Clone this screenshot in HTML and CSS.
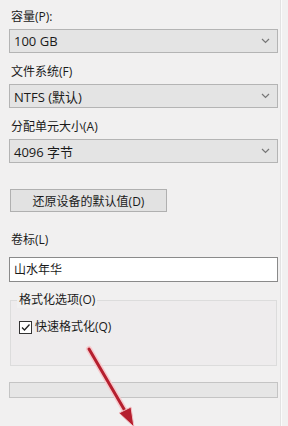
FILE: index.html
```html
<!DOCTYPE html>
<html lang="zh-CN">
<head>
    <meta charset="UTF-8">
    <meta name="viewport" content="width=device-width, initial-scale=1.0">
    <title>格式化</title>
    <link rel="stylesheet" href="styles.css">
</head>
<body>
    <div class="panel">
        <div class="field-label first">容量(P):</div>
        <div class="combo">
            <span>100 GB</span>
            <svg class="chevron" width="9" height="6" viewBox="0 0 9 6"><path d="M1 1 L4.5 4.5 L8 1" fill="none" stroke="#777" stroke-width="1.2"/></svg>
        </div>

        <div class="field-label">文件系统(F)</div>
        <div class="combo">
            <span>NTFS (默认)</span>
            <svg class="chevron" width="9" height="6" viewBox="0 0 9 6"><path d="M1 1 L4.5 4.5 L8 1" fill="none" stroke="#777" stroke-width="1.2"/></svg>
        </div>

        <div class="field-label">分配单元大小(A)</div>
        <div class="combo">
            <span>4096 字节</span>
            <svg class="chevron" width="9" height="6" viewBox="0 0 9 6"><path d="M1 1 L4.5 4.5 L8 1" fill="none" stroke="#777" stroke-width="1.2"/></svg>
        </div>

        <button class="restore-btn" type="button">还原设备的默认值(D)</button>

        <div class="field-label volume-label">卷标(L)</div>
        <div class="textbox">山水年华</div>

        <fieldset class="options">
            <legend>格式化选项(O)</legend>
            <label class="check-row">
                <span class="checkbox">
                    <svg width="11" height="11" viewBox="0 0 11 11"><path d="M2 5.5 L4.5 8 L9.5 2.5" fill="none" stroke="#222" stroke-width="1.3"/></svg>
                </span>
                快速格式化(Q)
            </label>
        </fieldset>

        <div class="progress"></div>
    </div>

    <svg class="arrow" width="288" height="426" viewBox="0 0 288 426">
        <line x1="89" y1="349" x2="128" y2="416" stroke="#f6c9cc" stroke-width="6" stroke-linecap="round"/>
        <line x1="89" y1="349" x2="128" y2="416" stroke="#b51f2e" stroke-width="3" stroke-linecap="round"/>
        <polygon points="134,427 119,413 131,407" fill="#b51f2e" stroke="#f3c2c6" stroke-width="1"/>
    </svg>
</body>
</html>
```

FILE: styles.css
```css
body {
    margin: 0;
    background: #f1f0f0;
    font-family: "Open Sans", "Noto Sans CJK SC", sans-serif;
    font-size: 12px;
    color: #1a1a1a;
    width: 288px;
    height: 426px;
    overflow: hidden;
    position: relative;
}
.panel {
    width: 281px;
    height: 426px;
    box-sizing: border-box;
    padding: 0 3px 0 9px;
    border-right: 1px solid #e2e2e2;
    box-shadow: 1px 0 0 #fbfbfb;
    display: flex;
    flex-direction: column;
    align-items: flex-start;
}
.field-label {
    line-height: 16px;
    height: 16px;
    margin: 11px 0 4px 2px;
}
.field-label.first {
    margin-top: 9px;
}
.combo {
    width: 269px;
    height: 24px;
    box-sizing: border-box;
    border: 1px solid #b4b4b4;
    background: #e4e4e4;
    display: flex;
    align-items: center;
    justify-content: space-between;
    padding: 0 7px 0 4px;
    font-size: 13px;
}
.chevron {
    display: block;
}
.restore-btn {
    margin: 26px 0 0 1px;
    width: 157px;
    height: 23px;
    box-sizing: border-box;
    border: 1px solid #b0b0b0;
    background: #e2e2e2;
    font-family: inherit;
    font-size: 12px;
    color: #1a1a1a;
    padding: 0;
}
.volume-label {
    margin-top: 20px;
    margin-bottom: 9px;
}
.textbox {
    width: 269px;
    height: 25px;
    box-sizing: border-box;
    border: 1px solid #8a8a8a;
    background: #fff;
    padding: 0 4px;
    line-height: 23px;
    font-size: 12px;
}
.options {
    margin: 10px 0 0 1px;
    width: 267px;
    height: 74px;
    box-sizing: border-box;
    border: 1px solid #dcdcdc;
    background: #eeeced;
    padding: 0 6px;
}
.options legend {
    padding: 0 2px;
    line-height: 16px;
    background: #f1f0f0;
}
.check-row {
    display: flex;
    align-items: center;
    gap: 3px;
    margin: 11px 0 0 2px;
    line-height: 16px;
}
.checkbox {
    width: 11px;
    height: 11px;
    border: 1px solid #333;
    background: #fff;
    display: flex;
}
.progress {
    margin-top: 16px;
    width: 269px;
    height: 16px;
    box-sizing: border-box;
    border: 1px solid #c4c4c4;
    background: #e6e6e6;
}
.arrow {
    position: absolute;
    left: 0;
    top: 0;
    pointer-events: none;
}
```
